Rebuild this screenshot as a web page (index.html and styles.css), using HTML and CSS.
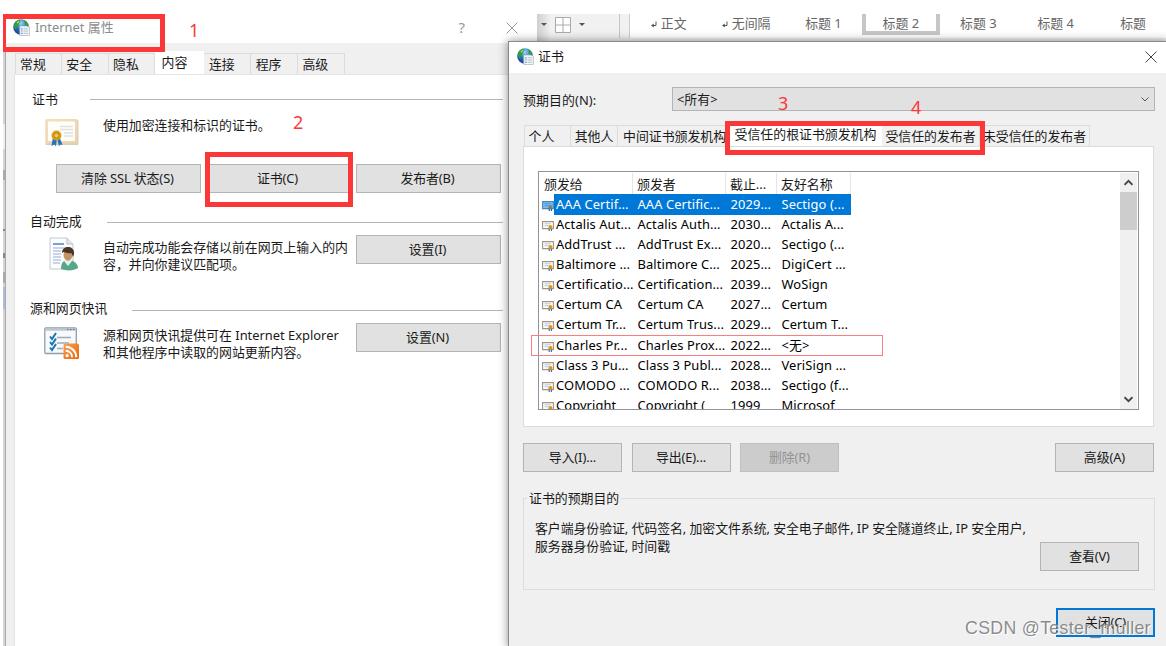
FILE: index.html
```html
<!DOCTYPE html>
<html lang="zh-CN">
<head>
    <meta charset="UTF-8">
    <meta name="viewport" content="width=device-width, initial-scale=1.0">
    <title>Internet 属性</title>
    <link rel="stylesheet" href="styles.css">
</head>
<body>
    <svg class="defs" width="0" height="0">
        <defs>
            <linearGradient id="paper" x1="0" y1="0" x2="1" y2="1">
                <stop offset="0" stop-color="#f6dfbd"/>
                <stop offset="1" stop-color="#ead2b0"/>
            </linearGradient>
            <radialGradient id="globeFill" cx="0.5" cy="0.25" r="0.8">
                <stop offset="0" stop-color="#9ad8f6"/>
                <stop offset="0.45" stop-color="#2a78c4"/>
                <stop offset="1" stop-color="#17347c"/>
            </radialGradient>
            <linearGradient id="rssFill" x1="0" y1="0" x2="1" y2="1">
                <stop offset="0" stop-color="#f8a254"/>
                <stop offset="1" stop-color="#e8650c"/>
            </linearGradient>
        </defs>
        <symbol id="globe" viewBox="0 0 17 17">
            <circle cx="8" cy="8" r="7.8" fill="url(#globeFill)"/>
            <path d="M1 6C1.800 3 4 1 6.500.7L7.500 2.500 5.500 4.500 5.800 6.500 3.500 8 3 10.500 1.500 9zM11.500 1.300c2.300 1 3.800 3 4.200 5.200L13.500 6.500 11.500 4z" fill="#37a02c"/>
            <path d="M3.500 3.500L6 1.500l.5 1-2 2z" fill="#a5e26a"/>
            <path d="M6.800 7h6.700l2.900 1v8.500H6.800z" fill="#f4f6f8" stroke="#a9b3bb" stroke-width=".7"/>
            <path d="M8.300 9.800h1.200M8.300 12h1.200M8.300 14.300h1.200" stroke="#2b8ad0" stroke-width="1.200"/>
            <path d="M10.500 9.800h4.400M10.500 12h4.400M10.500 14.300h4.400" stroke="#b4bfc8"/>
        </symbol>
        <symbol id="cert" viewBox="0 0 12 11">
            <path d="M.6 1.600h10.800v7H.6z" fill="#fff" stroke="#a3937c" stroke-width="1.100"/>
            <path d="M2.500 3.800h6.500M2.500 5.700h4" stroke="#a9bbdc" stroke-width=".9"/>
            <path d="M7.200 8v3M9.400 8v3" stroke="#4373b5" stroke-width="1.200"/>
            <circle cx="8.400" cy="7" r="2.100" fill="#d9981c"/>
        </symbol>
        <symbol id="cert-on" viewBox="0 0 12 11">
            <path d="M.6 1.600h10.800v7H.6z" fill="#7ebcf0" stroke="#4a86b8" stroke-width="1.100"/>
            <path d="M2.500 3.800h6.500M2.500 5.700h4" stroke="#4a90d6" stroke-width=".9"/>
            <path d="M7.200 8v3M9.400 8v3" stroke="#1f5ea8" stroke-width="1.200"/>
            <circle cx="8.400" cy="7" r="2.100" fill="#6c8a72"/>
        </symbol>
    </svg>

    <!-- Word ribbon -->
    <div class="ribbon">
        <div class="ribbon-tools">
            <i class="caret"></i>
            <svg class="grid-icon" viewBox="0 0 16 16"><path d="M.5.5h15v15H.5zM8 .5v15M.5 8h15" fill="#fff" stroke="#aaa"/></svg>
            <i class="caret"></i>
        </div>
        <div class="ribbon-styles">
            <span class="style"><svg class="ret" viewBox="0 0 6 7"><path d="M5 .5v4H2" fill="none" stroke="#555"/><path d="M0 4.500L2.800 2.500v4z" fill="#555"/></svg>正文</span>
            <span class="style"><svg class="ret" viewBox="0 0 6 7"><path d="M5 .5v4H2" fill="none" stroke="#555"/><path d="M0 4.500L2.800 2.500v4z" fill="#555"/></svg>无间隔</span>
            <span class="style">标题 1</span>
            <span class="style selected">标题 2</span>
            <span class="style">标题 3</span>
            <span class="style">标题 4</span>
            <span class="style">标题</span>
        </div>
    </div>

    <div class="backdrop"><i class="mark m1"></i><i class="mark m2"></i><i class="mark m3"></i><i class="mark m4"></i><i class="mark m5"></i><i class="mark m6"></i></div>

    <!-- Internet properties -->
    <div class="window props">
        <div class="title">
            <svg class="title-icon"><use href="#globe"/></svg>
            <span class="title-text">Internet 属性</span>
            <span class="help">?</span>
            <svg class="close" viewBox="0 0 12 12"><path d="M.5.5l11 11M11.500.5l-11 11" stroke="#999"/></svg>
        </div>
        <div class="tabs">
            <span class="tab">常规</span>
            <span class="tab">安全</span>
            <span class="tab">隐私</span>
            <span class="tab active">内容</span>
            <span class="tab">连接</span>
            <span class="tab">程序</span>
            <span class="tab">高级</span>
        </div>
        <div class="page">
            <div class="section s-cert">
                <div class="legend"><span>证书</span><hr></div>
                <div class="info">
                    <svg class="pic" viewBox="0 0 36 34">
                        <rect x="1.500" y="3" width="33" height="25" rx="1" fill="#d9cdbb"/>
                        <rect x="1.500" y="2" width="32" height="24.500" rx="1" fill="url(#paper)"/>
                        <rect x="4" y="4.500" width="27" height="19.500" fill="#fffdf8"/>
                        <path d="M16 9.500h13M16 12.500h13M20 16h9M20 19h9" stroke="#dfe1e4" stroke-width="1.500"/>
                        <path d="M9 20l-1.500 9 3-1.500 1.500 2 1-8 2 8 1-2 2.500 .5-3-8z" fill="#2674bd"/>
                        <circle cx="12.500" cy="18.500" r="5" fill="#d9a21d"/>
                        <circle cx="12.500" cy="18.500" r="2.600" fill="#f0c84a" stroke="#b47d10"/>
                    </svg>
                    <p>使用加密连接和标识的证书。</p>
                </div>
                <div class="buttons">
                    <button>清除 SSL 状态(S)</button>
                    <button>证书(C)</button>
                    <button>发布者(B)</button>
                </div>
            </div>
            <div class="section s-auto">
                <div class="legend"><span>自动完成</span><hr></div>
                <div class="info">
                    <svg class="pic" viewBox="0 0 36 34">
                        <path d="M6 1h17l6 6v25H6z" fill="#fbfcfd" stroke="#c3cad0"/>
                        <path d="M23 1v6h6" fill="#e4e9ed" stroke="#b5bec5"/>
                        <path d="M9 7h11" stroke="#7ba0cb" stroke-width="2"/>
                        <path d="M9 11h12M9 14h8M9 17h8M9 20h8M9 23h8M9 26h7" stroke="#94add0"/>
                        <path d="M17 32c0-7 3-9 7-9 6 0 10 4 10 8-4 3-12 3-17 1z" fill="#58a887"/>
                        <path d="M20 24l4 5 4-5-2-2h-4z" fill="#e3f2e9"/>
                        <ellipse cx="24" cy="18" rx="4.500" ry="5.800" fill="#c79265"/>
                        <path d="M18 16c0-8 13-8 12 1l-1 3-1.500-4c-4 1-6-1-8-1z" fill="#4b3526"/>
                    </svg>
                    <p>自动完成功能会存储以前在网页上输入的内<br>容，并向你建议匹配项。</p>
                    <button>设置(I)</button>
                </div>
            </div>
            <div class="section s-feed">
                <div class="legend"><span>源和网页快讯</span><hr></div>
                <div class="info">
                    <svg class="pic" viewBox="0 0 36 34">
                        <rect x=".8" y="1" width="31.500" height="25.500" rx="1" fill="#f7f9fb" stroke="#949ca8" stroke-width="1.300"/>
                        <path d="M1.500 2.500h30" stroke="#bcc6d2" stroke-width="2.500"/>
                        <path d="M23 2.500h1.500M26 2.500h1.500M29 2.500h1.500" stroke="#657080"/>
                        <path d="M13 10.500h14M13 16h12M13 21.500h6" stroke="#a4a9bc" stroke-width="1.400"/>
                        <path d="M6 9.500l2 2.500 4-6M6 15l2 2.500 4-6M6 20.500l2 2.500 4-6" fill="none" stroke="#1678b8" stroke-width="2"/>
                        <rect x="19.500" y="16.500" width="15.500" height="15.500" rx="1.500" fill="url(#rssFill)"/>
                        <circle cx="23.200" cy="28.600" r="1.600" fill="#fff"/>
                        <path d="M21.700 23.700a6.500 6.500 0 0 1 6.500 6.500M21.700 19.700a10.500 10.500 0 0 1 10.500 10.500" fill="none" stroke="#fff" stroke-width="2"/>
                    </svg>
                    <p>源和网页快讯提供可在 Internet Explorer<br>和其他程序中读取的网站更新内容。</p>
                    <button>设置(N)</button>
                </div>
            </div>
        </div>
    </div>

    <!-- Certificates dialog -->
    <div class="window certs">
        <div class="title">
            <svg class="title-icon"><use href="#globe"/></svg>
            <span class="title-text">证书</span>
            <svg class="close" viewBox="0 0 12 12"><path d="M.5.5l11 11M11.500.5l-11 11" stroke="#444"/></svg>
        </div>
        <div class="purpose">
            <label>预期目的(N):</label>
            <div class="select">&lt;所有&gt;<svg viewBox="0 0 8 5"><path d="M.5.5L4 4 7.500.5" fill="none" stroke="#555"/></svg></div>
        </div>
        <div class="tabs">
            <span class="tab t1">个人</span>
            <span class="tab t2">其他人</span>
            <span class="tab t3">中间证书颁发机构</span>
            <span class="tab t4 active">受信任的根证书颁发机构</span>
            <span class="tab t5">受信任的发布者</span>
            <span class="tab t6">未受信任的发布者</span>
        </div>
        <div class="pane">
            <div class="list">
                <div class="rows">
                    <div class="head"><span>颁发给</span><span>颁发者</span><span>截止...</span><span>友好名称</span></div>
                    <div class="row selected"><svg><use href="#cert-on"/></svg><span>AAA Certif...</span><span>AAA Certific...</span><span>2029...</span><span>Sectigo (...</span></div>
                    <div class="row"><svg><use href="#cert"/></svg><span>Actalis Aut...</span><span>Actalis Auth...</span><span>2030...</span><span>Actalis A...</span></div>
                    <div class="row"><svg><use href="#cert"/></svg><span>AddTrust ...</span><span>AddTrust Ex...</span><span>2020...</span><span>Sectigo (...</span></div>
                    <div class="row"><svg><use href="#cert"/></svg><span>Baltimore ...</span><span>Baltimore C...</span><span>2025...</span><span>DigiCert ...</span></div>
                    <div class="row"><svg><use href="#cert"/></svg><span>Certificatio...</span><span>Certification...</span><span>2039...</span><span>WoSign</span></div>
                    <div class="row"><svg><use href="#cert"/></svg><span>Certum CA</span><span>Certum CA</span><span>2027...</span><span>Certum</span></div>
                    <div class="row"><svg><use href="#cert"/></svg><span>Certum Tr...</span><span>Certum Trus...</span><span>2029...</span><span>Certum T...</span></div>
                    <div class="row"><svg><use href="#cert"/></svg><span>Charles Pr...</span><span>Charles Prox...</span><span>2022...</span><span>&lt;无&gt;</span></div>
                    <div class="row"><svg><use href="#cert"/></svg><span>Class 3 Pu...</span><span>Class 3 Publ...</span><span>2028...</span><span>VeriSign ...</span></div>
                    <div class="row"><svg><use href="#cert"/></svg><span>COMODO ...</span><span>COMODO R...</span><span>2038...</span><span>Sectigo (f...</span></div>
                    <div class="row"><svg><use href="#cert"/></svg><span>Copyright</span><span>Copyright (</span><span>1999</span><span>Microsof</span></div>
                </div>
                <div class="scrollbar">
                    <svg viewBox="0 0 8 6"><path d="M.5 5L4 1.500 7.500 5" fill="none" stroke="#444" stroke-width="1.600"/></svg>
                    <div class="thumb"></div>
                    <svg viewBox="0 0 8 6"><path d="M.5 1L4 4.500 7.500 1" fill="none" stroke="#444" stroke-width="1.600"/></svg>
                </div>
            </div>
        </div>
        <div class="actions">
            <button>导入(I)...</button>
            <button>导出(E)...</button>
            <button disabled>删除(R)</button>
            <button class="advanced">高级(A)</button>
        </div>
        <fieldset class="usage">
            <legend>证书的预期目的</legend>
            <p>客户端身份验证, 代码签名, 加密文件系统, 安全电子邮件, IP 安全隧道终止, IP 安全用户,<br>服务器身份验证, 时间戳</p>
            <button>查看(V)</button>
        </fieldset>
        <div class="footer"><button class="default">关闭(C)</button></div>
    </div>

    <!-- Step marks -->
    <div class="frame f1"></div>
    <div class="frame f2"></div>
    <div class="frame f3"></div>
    <div class="frame thin"></div>
    <span class="step n1">1</span>
    <span class="step n2">2</span>
    <span class="step n3">3</span>
    <span class="step n4">4</span>
    <div class="watermark">CSDN @Tester_muller</div>
</body>
</html>
```
FILE: styles.css
```css
* {
    box-sizing: border-box;
}

body {
    position: relative;
    width: 1166px;
    height: 646px;
    margin: 0;
    overflow: hidden;
    background: #fff;
    color: #1a1a1a;
    font-family: "Noto Sans", "Noto Sans CJK SC", sans-serif;
    font-size: 12.9px;
    line-height: 17.300px;
    white-space: nowrap;
}

.defs {
    position: absolute;
}

p {
    margin: 0;
}

button {
    width: 99px;
    height: 29px;
    padding: 0;
    border: 1px solid #b4b4b4;
    background: #e1e1e1;
    color: #1a1a1a;
    font: inherit;
    line-height: 27px;
    letter-spacing: -0.1px;
}

button:disabled {
    border-color: #c0c0c0;
    background: #ccc;
    color: #929292;
}

button.default {
    border: 2px solid #0078d7;
    line-height: 25px;
}

/* ribbon */
.ribbon {
    position: absolute;
    left: 537px;
    top: 14px;
    width: 629px;
    height: 28px;
    display: flex;
    overflow: hidden;
    background: linear-gradient(90deg, #cfcfcf, #f1f1f1 14px);
    color: #666;
}

.ribbon-tools {
    display: flex;
    flex: none;
    align-items: center;
    gap: 8px;
    width: 82px;
    height: 21px;
    padding-left: 4px;
}

.grid-icon {
    width: 16px;
    height: 16px;
}

.caret {
    border: 3px solid transparent;
    border-top-color: #555;
    border-bottom: 0;
}

.ribbon-styles {
    display: flex;
    flex: none;
    width: 547px;
    height: 24px;
    border-left: 1px solid #c6c6c6;
    box-shadow: inset 9px 0 #f1f1f1, inset 10px 0 #ccc;
    background: #fff;
    padding-left: 10px;
    overflow: hidden;
}

.style {
    flex: none;
    width: 77.4px;
    height: 21px;
    line-height: 18px;
    text-align: center;
}

.style.selected {
    border: 4px solid #c6c6c6;
    border-top: 0;
}

.ret {
    width: 6px;
    height: 7px;
    margin-right: 4px;
}

/* strip of the window behind */
.backdrop {
    position: absolute;
    left: 3px;
    top: 52px;
    width: 3px;
    height: 594px;
    background: linear-gradient(90deg, #d4d4d4 66%, #a8a8a8 66%);
}

.mark {
    position: absolute;
    left: 0;
    width: 2px;
    height: 2px;
    background: #888;
}

.m1 { top: 72px; height: 25px; background: #f0f0f0; }
.m2 { top: 118px; height: 10px; background: #aaa; }
.m3 { top: 177px; }
.m4 { top: 201px; height: 5px; }
.m5 { top: 220px; height: 11px; background: #aaa; }
.m6 { top: 235px; height: 22px; background: #a9bde0; }

/* windows */
.window {
    position: absolute;
    overflow: hidden;
    background: #f0f0f0;
}

.title {
    display: flex;
    align-items: center;
    background: #fff;
}

.title-icon {
    width: 17px;
    height: 17px;
}

.tabs {
    display: flex;
    align-items: flex-end;
}

.tab {
    height: 21px;
    border: 1px solid #dcdcdc;
    border-bottom: 0;
    border-left-width: 0;
    line-height: 20px;
    text-align: center;
}

.tab:first-child {
    border-left-width: 1px;
}

.tab.active {
    height: 23px;
    border: 0;
    background: #fff;
}

.props {
    left: 6px;
    top: 14px;
    width: 531px;
    height: 632px;
}

.props .title {
    height: 29px;
    padding: 0 19px 2px 7px;
    color: #8c8c8c;
}

.props .title-text {
    margin-left: 5px;
}

.help {
    margin-left: auto;
    margin-right: 41px;
    color: #999;
    font-size: 15px;
}

.close {
    width: 12px;
    height: 12px;
}

.props .tabs {
    height: 31px;
    padding-left: 9px;
}

.props .tab {
    width: 46.8px;
    padding-right: 11px;
}

.props .tab.active {
    width: 49px;
    line-height: 22px;
}

.page {
    height: 572px;
    margin-left: 8px;
    border: 1px solid #e4e4e4;
    border-bottom: 0;
    background: #fff;
    padding: 16px 33px 0 14px;
}

.section {
    height: 87px;
}

.s-cert {
    height: 122px;
}

.legend {
    display: flex;
    align-items: center;
    height: 18px;
    width: 474px;
    padding-left: 1px;
}

.legend hr {
    flex: 1;
    margin: 0 0 0 25px;
    border: 0;
    border-top: 1px solid #b4b4b4;
}

.s-cert .legend {
    padding-left: 3px;
}

.s-cert .legend hr {
    margin: 0 0 2px 32px;
}

.s-feed .legend hr {
    margin-top: 2px;
}

.info {
    display: flex;
}

.info p {
    width: 253px;
}

.pic {
    flex: none;
    width: 36px;
    height: 34px;
    margin: 0 23px 0 15px;
}

.info button,
.buttons button {
    width: 145px;
    padding-right: 2px;
}

.s-cert .pic {
    margin-top: 8px;
}

.s-cert .info p {
    padding-top: 8px;
}

.s-auto .info {
    padding-top: 4px;
}

.s-feed .info {
    padding-top: 5px;
}

.s-auto .info p,
.s-feed .info p {
    padding-top: 4px;
}

.s-auto .pic {
    margin-top: 2px;
}

.s-feed .pic {
    margin-top: 4px;
}

.buttons {
    display: flex;
    gap: 5px;
    padding: 13px 0 0 27px;
}

.certs {
    left: 508px;
    top: 41px;
    width: 660px;
    height: 607px;
    border: 1px solid #8a8a8a;
    box-shadow: 0 0 9px rgba(0, 0, 0, 0.45);
}

.certs .title {
    height: 31px;
    padding: 0 10px 2px 8px;
}

.certs .title-text {
    margin-left: 4px;
}

.certs .close {
    margin-left: auto;
}

.purpose {
    display: flex;
    align-items: center;
    height: 24px;
    margin: 14px 12px 0 14px;
}

.purpose label {
    padding-top: 4px;
    letter-spacing: 0.1px;
}

.select {
    display: flex;
    align-items: center;
    justify-content: space-between;
    width: 483px;
    height: 24px;
    margin-left: auto;
    padding: 1px 5px 0 4px;
    border: 1px solid #b4b4b4;
    background: #e1e1e1;
}

.select svg {
    width: 8px;
    height: 5px;
}

.certs .tabs {
    height: 35px;
    padding-left: 15px;
}

.certs .tab {
    line-height: 21px;
}

.t1 { width: 47px; padding-right: 12px; }
.t2 { width: 47px; }
.t3 { width: 109px; padding-left: 5px; text-align: left; }
.t4 { width: 155px; padding-left: 2px; }
.certs .tab.active { line-height: 23px; }
.t5 { width: 98px; }
.t6 { width: 110px; }

.pane {
    width: 631px;
    height: 281px;
    margin-left: 14px;
    border: 1px solid #dcdcdc;
    background: #fff;
    padding: 24px 14px 0;
}

.list {
    display: flex;
    justify-content: space-between;
    width: 601px;
    height: 239px;
    border: 1px solid #8f949c;
    padding: 1px 1px 0 1px;
    overflow: hidden;
}

.rows {
    width: 312px;
}

.head,
.row {
    display: grid;
    grid-template-columns: 93px 93px 51px 74px;
    height: 21px;
    line-height: 22px;
}

.head span {
    padding-left: 4px;
    border-right: 1px solid #e5e5e5;
}

.row {
    grid-template-columns: 14px 79px 93px 51px 74px;
    height: 20.080px;
    line-height: 21px;
    letter-spacing: 0.1px;
    color: #000;
}

.row svg {
    width: 12px;
    height: 11px;
    margin: 6px 0 0 2px;
}

.row span {
    padding-left: 4.5px;
}

.row svg + span {
    padding-left: 2px;
}

.row.selected span {
    background: #0078d7;
    color: #fff;
}

.scrollbar {
    display: flex;
    flex-direction: column;
    align-items: center;
    width: 17px;
    background: #f0f0f0;
}

.scrollbar svg {
    width: 9px;
    height: 7px;
    margin: 6px 0;
}

.thumb {
    width: 17px;
    height: 38px;
    margin-bottom: auto;
    background: #cdcdcd;
}

.actions {
    display: flex;
    gap: 9.5px;
    padding: 16px 13px 0 14px;
}

.advanced {
    margin-left: auto;
}

.usage {
    height: 100px;
    margin: 18px 12px 0 14px;
    padding: 13px 15px 0 11px;
    border: 1px solid #dcdcdc;
}

.usage legend {
    margin-left: -8px;
    padding: 0 2px;
}

.usage p {
    letter-spacing: -0.06px;
}

.usage button {
    display: block;
    margin: -13px 0 0 auto;
}

.footer {
    display: flex;
    justify-content: flex-end;
    padding: 18px 12px 0 0;
}

/* step marks over the windows */
.frame {
    position: absolute;
    border: 5px solid #fb3737;
}

.f1 { left: 3px; top: 14px; width: 162px; height: 38px; border-left-width: 3px; }
.f2 { left: 205px; top: 152px; width: 148px; height: 55px; }
.f3 { left: 725px; top: 121px; width: 260px; height: 34px; }
.frame.thin { left: 531px; top: 335px; width: 352px; height: 21px; border: 1px solid #f98080; }

.step {
    position: absolute;
    color: #fb3737;
    font-size: 18px;
    line-height: 20px;
}

.n1 { left: 189px; top: 20px; }
.n2 { left: 293px; top: 112px; }
.n3 { left: 778px; top: 93px; }
.n4 { left: 911px; top: 97px; }

.watermark {
    position: absolute;
    left: 965px;
    top: 618px;
    color: rgba(120, 120, 120, 0.85);
    font-family: "Liberation Sans", sans-serif;
    font-size: 17.800px;
    line-height: 20px;
    letter-spacing: 0.3px;
    text-shadow: 1px 1px #fff;
}
```
